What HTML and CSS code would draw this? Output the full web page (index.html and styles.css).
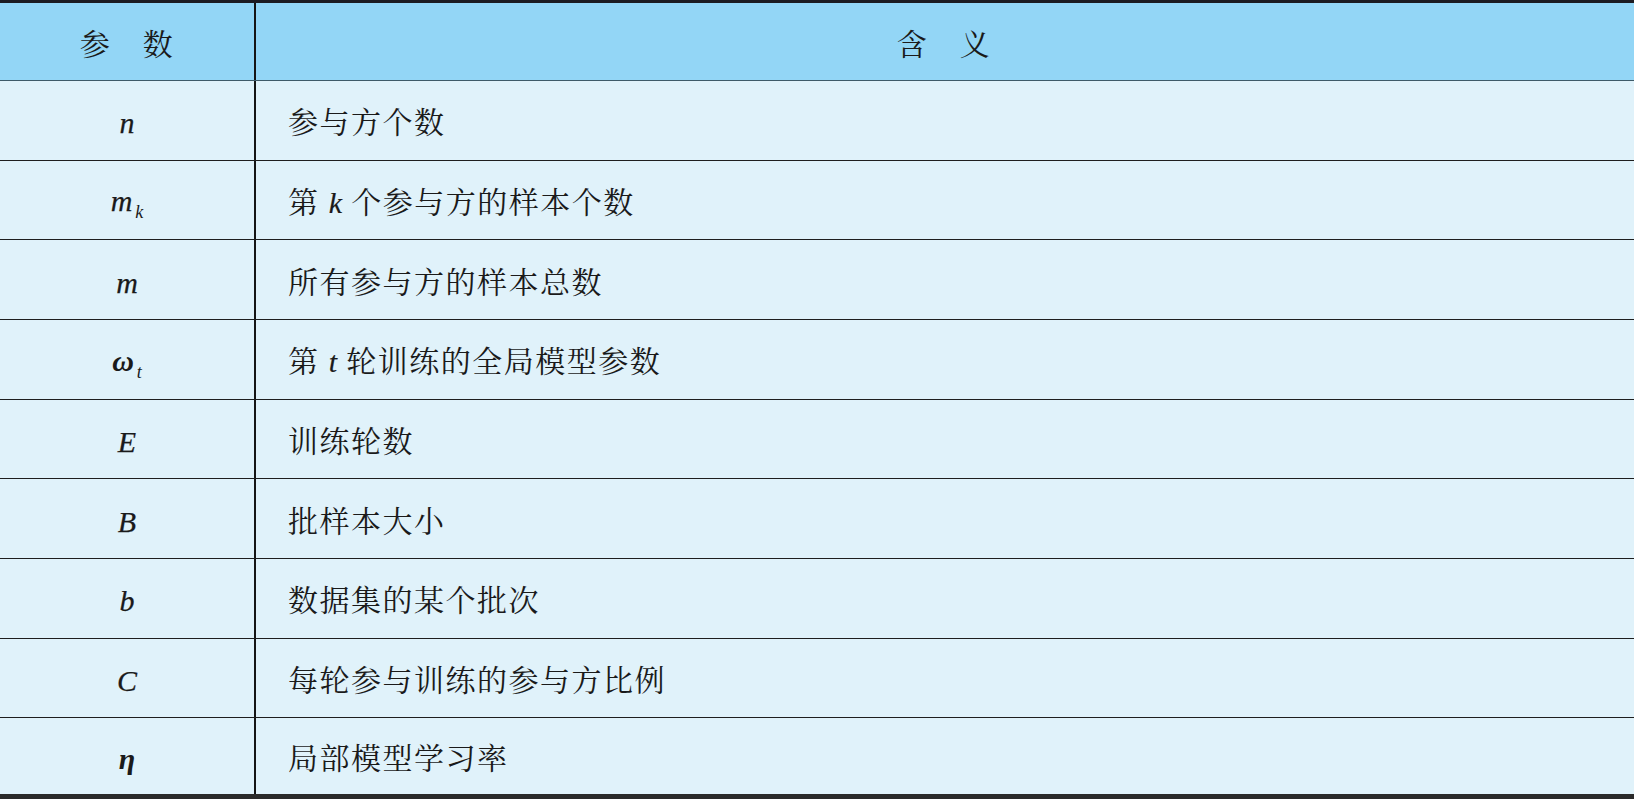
FILE: index.html
```html
<!DOCTYPE html>
<html lang="zh">
<head>
<meta charset="utf-8">
<title>参数表</title>
<link rel="stylesheet" href="styles.css">
</head>
<body>
<div class="table">
  <div class="row head">
    <div class="cell c1"><span>参　数</span></div>
    <div class="cell c2 center"><span>含　义</span></div>
  </div>
  <div class="row">
    <div class="cell c1"><span><span class="m">n</span></span></div>
    <div class="cell c2"><span>参与方个数</span></div>
  </div>
  <div class="row">
    <div class="cell c1"><span><span class="m">m</span><sub class="s">k</sub></span></div>
    <div class="cell c2"><span>第 <span class="mi">k</span> 个参与方的样本个数</span></div>
  </div>
  <div class="row">
    <div class="cell c1"><span><span class="m">m</span></span></div>
    <div class="cell c2"><span>所有参与方的样本总数</span></div>
  </div>
  <div class="row">
    <div class="cell c1"><span><span class="m b">ω</span><sub class="s">t</sub></span></div>
    <div class="cell c2"><span>第 <span class="mi">t</span> 轮训练的全局模型参数</span></div>
  </div>
  <div class="row">
    <div class="cell c1"><span><span class="m">E</span></span></div>
    <div class="cell c2"><span>训练轮数</span></div>
  </div>
  <div class="row">
    <div class="cell c1"><span><span class="m">B</span></span></div>
    <div class="cell c2"><span>批样本大小</span></div>
  </div>
  <div class="row">
    <div class="cell c1"><span><span class="m">b</span></span></div>
    <div class="cell c2"><span>数据集的某个批次</span></div>
  </div>
  <div class="row">
    <div class="cell c1"><span><span class="m">C</span></span></div>
    <div class="cell c2"><span>每轮参与训练的参与方比例</span></div>
  </div>
  <div class="row last">
    <div class="cell c1"><span><span class="m b">η</span></span></div>
    <div class="cell c2"><span>局部模型学习率</span></div>
  </div>
</div>
</body>
</html>
```

FILE: styles.css
```css
html, body {
  margin: 0;
  padding: 0;
  background: #e0f2fa;
}
.table {
  width: 1634px;
  border-top: 3px solid #1c1c22;
  border-bottom: 6px solid #2a2a2a;
  font-family: "Noto Serif CJK SC", "Noto Sans CJK SC", serif;
  color: #1a1a1a;
  box-sizing: border-box;
}
.row {
  display: grid;
  grid-template-columns: 256px 1fr;
  height: 79.66px;
  border-bottom: 1px solid #1e1e1e;
  box-sizing: border-box;
  background: #e0f2fa;
}
.row.head {
  height: 78px;
  background: #93d6f6;
  border-bottom: 1px solid #3e5a68;
}
.row.last {
  height: 75.3px;
  border-bottom: none;
}
.cell {
  display: flex;
  align-items: center;
  font-size: 30px;
  letter-spacing: 1.5px;
}
.c1 {
  justify-content: center;
  border-right: 2px solid #151515;
}
.c2 {
  padding-left: 32px;
}
.c2.center {
  justify-content: center;
  padding-left: 0;
  padding-right: 2px;
}
.m {
  font-family: "Liberation Serif", "Times New Roman", serif;
  font-style: italic;
  font-size: 30px;
  letter-spacing: 0;
  -webkit-text-stroke: 0.25px #1a1a1a;
}
.m.b {
  font-weight: bold;
  -webkit-text-stroke: 0;
}
.mi {
  font-family: "Liberation Serif", "Times New Roman", serif;
  font-style: italic;
  font-size: 30px;
  letter-spacing: 0;
  -webkit-text-stroke: 0.2px #1a1a1a;
}
.s {
  font-family: "Liberation Serif", "Times New Roman", serif;
  font-style: italic;
  font-size: 18px;
  letter-spacing: 0;
  vertical-align: -7px;
  margin-left: 3px;
}
```
